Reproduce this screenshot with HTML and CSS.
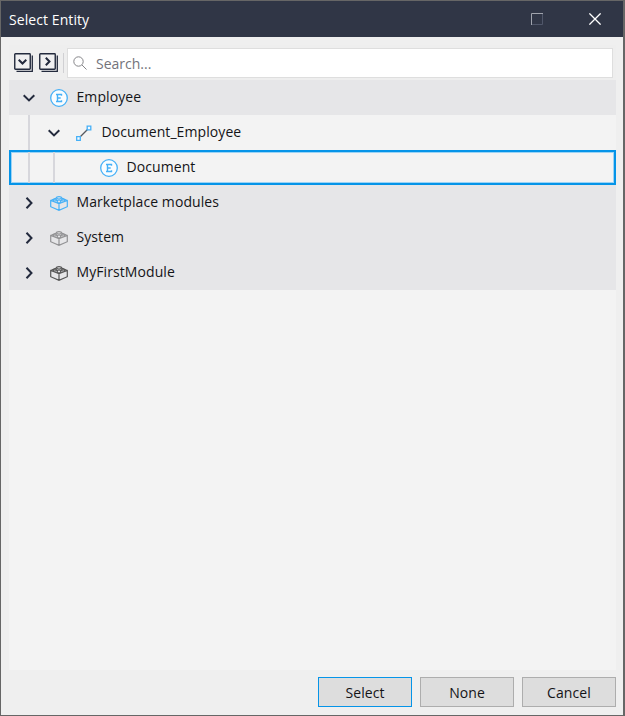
FILE: index.html
```html
<!DOCTYPE html>
<html lang="en">
<head>
<meta charset="utf-8">
<title>Select Entity</title>
<link rel="stylesheet" href="styles.css">
</head>
<body>
<svg class="defs" aria-hidden="true">
  <symbol id="down" viewBox="0 0 12 8"><path d="M.7 1.3 6 6.4 11.3 1.3" fill="none" stroke="#232a3d" stroke-width="2"/></symbol>
  <symbol id="right" viewBox="0 0 8 12"><path d="M1.5.7 6.5 6 1.5 11.3" fill="none" stroke="#232a3d" stroke-width="2"/></symbol>
  <symbol id="entity" viewBox="0 0 18 18"><circle cx="9" cy="9" r="8.3" fill="#f9fcfe" stroke="#45b0f7" stroke-width="1.3"/><path d="M6 5.5h5.5v1.3M6 12.5h5.5v-1.3M7.5 5v8M7.5 9h3.2" fill="none" stroke="#45b0f7" stroke-width="1.4"/></symbol>
  <symbol id="module" viewBox="0 0 18 15"><g fill="none" stroke="currentColor" stroke-width="1.2"><path d="M.7 4.5 9 7.5l8.3-3v6.2L9 14.3.7 10.7zM9 7.5v6.8M.7 4.5l5.6-2.4M11.7 2.1l5.6 2.4"/><ellipse cx="9" cy="1.8" rx="2.5" ry="1.2"/><ellipse cx="4.8" cy="4" rx="1.8" ry="1"/><ellipse cx="13.2" cy="4" rx="1.8" ry="1"/><ellipse cx="9" cy="5.5" rx="1.8" ry="1.5"/></g></symbol>
</svg>
<main class="window">
  <header class="titlebar">
    <h1 class="title">Select Entity</h1>
    <svg class="maximize" viewBox="0 0 12 12"><path d="M.5 12V.5H12" fill="none" stroke="#a0a4ad"/><path d="M1 11.5h10.5V1" fill="none" stroke="#50576a"/></svg>
    <svg class="close" viewBox="0 0 12 12"><path d="m.4.4 11.2 11.2M11.6.4.4 11.6" stroke="#fff" stroke-width="1.3"/></svg>
  </header>
  <div class="toolbar">
    <svg class="tool" viewBox="0 0 19 19"><rect x=".75" y=".75" width="15.5" height="15.5" rx=".7" fill="#f0f0f1" stroke="#232a3d" stroke-width="1.4"/><path d="M18.3 2.5v15.8H2.5" fill="none" stroke="#232a3d" stroke-width="1.3"/><path d="m4.7 6.8 3.8 3.7 3.8-3.7" fill="none" stroke="#232a3d" stroke-width="2"/></svg>
    <svg class="tool" viewBox="0 0 19 19"><rect x=".75" y=".75" width="15.5" height="15.5" rx=".7" fill="#f0f0f1" stroke="#232a3d" stroke-width="1.4"/><path d="M18.3 2.5v15.8H2.5" fill="none" stroke="#232a3d" stroke-width="1.3"/><path d="m6.8 4.7 3.7 3.8-3.7 3.8" fill="none" stroke="#232a3d" stroke-width="2"/></svg>
    <span class="divider"></span>
    <div class="search">
      <svg class="lens" viewBox="0 0 14 14"><circle cx="5.5" cy="5.5" r="4.7" fill="none" stroke="#858589"/><path d="m9 9 4.5 4.5" stroke="#858589"/></svg>
      <span class="placeholder">Search...</span>
    </div>
  </div>
  <div class="tree">
    <div class="row group"><span class="arrow"><svg class="down"><use href="#down"/></svg></span><svg class="entity"><use href="#entity"/></svg><span class="text">Employee</span></div>
    <div class="row child"><span class="guide"></span><span class="arrow"><svg class="down"><use href="#down"/></svg></span><svg class="association" viewBox="0 0 18 18"><path d="M5 13 13 5" stroke="#55585e" stroke-width="1.2"/><path d="M1.7 12.7h3.6v3.6H1.7zM12.2 2.2h3.6v3.6h-3.6z" fill="#f5faff" stroke="#45b0f7" stroke-width="1.3"/></svg><span class="text">Document_Employee</span></div>
    <div class="row selected"><span class="guide"></span><span class="guide second"></span><svg class="entity"><use href="#entity"/></svg><span class="text">Document</span></div>
    <div class="row group"><span class="arrow"><svg class="right"><use href="#right"/></svg></span><svg class="module blue"><use href="#module"/></svg><span class="text">Marketplace modules</span></div>
    <div class="row group"><span class="arrow"><svg class="right"><use href="#right"/></svg></span><svg class="module gray"><use href="#module"/></svg><span class="text">System</span></div>
    <div class="row group"><span class="arrow"><svg class="right"><use href="#right"/></svg></span><svg class="module"><use href="#module"/></svg><span class="text">MyFirstModule</span></div>
  </div>
  <footer class="actions">
    <button class="button primary">Select</button>
    <button class="button">None</button>
    <button class="button">Cancel</button>
  </footer>
</main>
</body>
</html>
```
FILE: styles.css
```css
* { box-sizing: border-box; }
body { margin: 0; font-family: "Open Sans", "Noto Sans", sans-serif; font-size: 14px; letter-spacing: .08px; color: #141417; }
svg { display: block; flex: none; }
.defs { display: none; }
.window { display: flex; flex-direction: column; width: 625px; height: 716px; border: 1px solid #666; border-right-width: 2px; background: #efefef; }
.titlebar { display: flex; align-items: center; height: 36px; padding: 0 22px 0 8px; background: #303646; color: #fff; }
.title { margin: 0; flex: 1; padding-top: 2px; font-size: 14px; font-weight: 400; line-height: 20px; }
.maximize { width: 12px; height: 12px; margin-right: 46px; }
.close { width: 12px; height: 12px; }
.toolbar { display: flex; align-items: center; height: 35px; margin: 8px 7px 0 8px; padding: 0 3px 0 5px; background: #eee; }
.tool { width: 19px; height: 19px; margin-right: 6px; }
.divider { width: 1px; height: 20px; margin: 0 3px 0 -1px; background: #d0d0d3; }
.search { display: flex; flex: 1; align-items: center; height: 30px; padding-left: 5px; border: 1px solid #dedede; background: #fff; color: #73737a; }
.lens { width: 14px; height: 14px; margin-right: 9px; }
.placeholder { padding-top: 2px; line-height: 20px; letter-spacing: 0; }
.tree { height: 590px; margin: 0 7px 0 8px; background: #f3f3f3; }
.row { position: relative; display: flex; align-items: center; height: 35px; padding-left: 11px; }
.group { background: #e6e6e8; }
.child { padding-left: 36px; }
.selected { padding-left: 89px; border: 2px solid #0594e8; box-shadow: inset 0 0 0 1px #9bd3f5; }
.arrow { display: flex; justify-content: center; width: 18px; margin-right: 12px; }
.down { width: 12px; height: 8px; }
.right { width: 8px; height: 12px; }
.entity { width: 18px; height: 18px; margin-right: 9px; }
.association { width: 18px; height: 18px; margin-right: 9px; }
.module { width: 18px; height: 15px; margin: 2px 9px 0 0; color: #555; }
.blue { color: #45b0f7; }
.gray { color: #929294; }
.text { padding-bottom: 2px; margin-left: -.5px; line-height: 20px; white-space: nowrap; }
.guide { position: absolute; left: 19px; top: 0; bottom: 0; width: 2px; background: #d7d7dc; }
.selected .guide { left: 17px; }
.selected .second { left: 42px; }
.actions { display: flex; justify-content: flex-end; gap: 8px; padding: 7px 7px 0; }
.button { width: 94px; height: 30px; padding: 0; border: 1px solid #adadad; background: #ddd; color: #141417; font: inherit; letter-spacing: inherit; }
.primary { border-color: #0594e8; }
```
